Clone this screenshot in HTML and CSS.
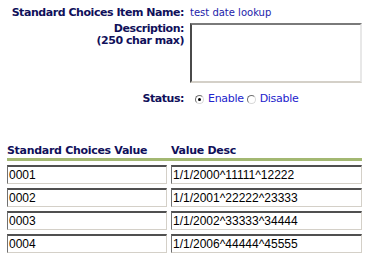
FILE: index.html
```html
<!DOCTYPE html>
<html>
<head>
<meta charset="utf-8">
<link rel="stylesheet" href="styles.css">
</head>
<body>
<div class="page">
  <div class="form">
    <div class="lbl first">Standard Choices Item Name:</div>
    <div class="val first">test date lookup</div>
    <div class="lbl">Description:<br>(250 char max)</div>
    <div class="val"><div class="desc"></div></div>
    <div class="lbl status">Status:</div>
    <div class="val radios">
      <span class="radio checked"></span><span class="opt">Enable</span>
      <span class="radio"></span><span class="opt">Disable</span>
    </div>
  </div>
  <div class="values">
    <div class="head">Standard Choices Value</div>
    <div class="head">Value Desc</div>
    <div class="rule"></div>
    <div class="field">0001</div><div class="field">1/1/2000^11111^12222</div>
    <div class="field">0002</div><div class="field">1/1/2001^22222^23333</div>
    <div class="field">0003</div><div class="field">1/1/2002^33333^34444</div>
    <div class="field">0004</div><div class="field">1/1/2006^44444^45555</div>
  </div>
</div>
</body>
</html>
```

FILE: styles.css
```css
html, body {
  margin: 0;
  padding: 0;
  background: #ffffff;
}
.page {
  padding: 7px 8px 0 7px;
  font-family: "DejaVu Sans", Verdana, sans-serif;
}
.form {
  display: grid;
  grid-template-columns: 177px 172px;
  column-gap: 6px;
  row-gap: 3px;
}
.lbl {
  text-align: right;
  font-weight: bold;
  font-size: 11px;
  line-height: 12px;
  color: #10105a;
  white-space: nowrap;
  letter-spacing: -0.45px;
}
.val {
  font-size: 10px;
  line-height: 12px;
  color: #2222aa;
  white-space: nowrap;
}
.first {
  padding-bottom: 1px;
}
.desc {
  height: 56px;
  border-style: solid;
  border-width: 2px;
  border-color: #7a7a7a #e8e8e8 #d4d0c8 #4a4a4a;
}
.status {
  margin-top: 7px;
}
.radios {
  margin-top: 7px;
  display: flex;
  align-items: center;
  font-size: 11px;
  color: #2222cc;
}
.radio {
  width: 7px;
  height: 7px;
  border-radius: 50%;
  border: 1px solid;
  border-color: #707070 #d8d8d8 #d8d8d8 #707070;
  background: #fff;
  margin: 0 4px 0 5px;
  position: relative;
}
.radio.checked::after {
  content: "";
  position: absolute;
  left: 2px;
  top: 2px;
  width: 3px;
  height: 3px;
  border-radius: 50%;
  background: #000;
}
.opt {
  margin-right: -2px;
  letter-spacing: -0.3px;
}
.values {
  margin-top: 39px;
  display: grid;
  grid-template-columns: 160px 191px;
  column-gap: 4px;
  row-gap: 4px;
}
.head {
  font-weight: bold;
  font-size: 11px;
  line-height: 13px;
  color: #10105a;
  letter-spacing: -0.3px;
  white-space: nowrap;
}
.rule {
  grid-column: 1 / 3;
  height: 3px;
  background: #a3b872;
  margin-top: -3px;
  margin-bottom: -2px;
}
.field {
  height: 16px;
  border-style: solid;
  border-width: 2px 1px 1px 1px;
  border-color: #505050 #d4d0c8 #d4d0c8 #707070;
  font-family: "Liberation Sans", Arial, sans-serif;
  font-size: 12px;
  line-height: 16px;
  padding-left: 1px;
  color: #000;
}
```
